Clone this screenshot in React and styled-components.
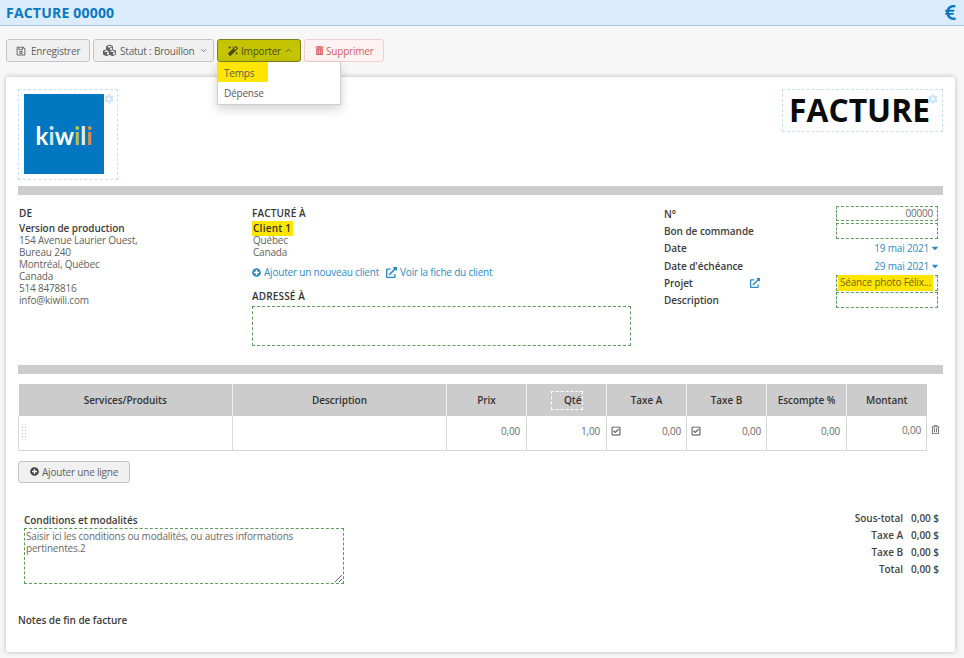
import styled, { createGlobalStyle } from 'styled-components';
import {
  FaRegSave,
  FaCubes,
  FaMagic,
  FaTrashAlt,
  FaRegTrashAlt,
  FaCog,
  FaPlusCircle,
  FaExternalLinkAlt,
  FaRegCheckSquare,
  FaEuroSign,
  FaCaretDown,
} from 'react-icons/fa';
import { FiChevronDown, FiChevronUp } from 'react-icons/fi';

const GlobalStyle = createGlobalStyle`
  html, body {
    margin: 0;
    padding: 0;
    height: 100%;
    overflow: hidden;
    background: #f7f7f7;
    font-family: "Open Sans", "Liberation Sans", sans-serif;
    font-size: 10px;
    letter-spacing: -0.2px;
    color: #5f5f5f;
  }
  * { box-sizing: border-box; }
  svg { flex: none; }
`;

const Header = styled.header`
  height: 26px;
  background: #daecfd;
  border-bottom: 1px solid #a9c7e2;
  display: flex;
  align-items: center;
  justify-content: space-between;
  padding: 0 5px 0 6px;
  color: #0a78bf;
`;

const Title = styled.h1`
  margin: 0;
  font-size: 14px;
  font-weight: 700;
  letter-spacing: 0.2px;
`;

const Toolbar = styled.div`
  display: flex;
  padding: 13px 6px 15px;
  height: 51px;
`;

const Button = styled.button`
  height: 23px;
  display: flex;
  align-items: center;
  gap: ${(p) => p.$gap || 4}px;
  padding: 0 0 0 ${(p) => p.$pad || 9}px;
  width: ${(p) => p.$width}px;
  margin-right: ${(p) => p.$after || 0}px;
  flex: none;
  white-space: nowrap;
  font: inherit;
  letter-spacing: inherit;
  border-radius: 3px;
  border: 1px solid ${(p) => (p.$active ? '#7d7d20' : p.$danger ? '#f2d0d0' : '#c4c4c4')};
  background: ${(p) => (p.$active ? '#c4c400' : p.$danger ? '#fdf3f3' : '#f0f0f0')};
  color: ${(p) => (p.$active ? '#4b4b10' : p.$danger ? '#d9605e' : '#5f5f5f')};
`;

const Menu = styled.div`
  position: absolute;
  left: 217px;
  top: 62px;
  width: 124px;
  height: 43px;
  background: #fff;
  border: 1px solid #cfcfcf;
  border-top: 0;
  box-shadow: 0 4px 10px rgba(0, 0, 0, 0.18);
  z-index: 5;
`;

const MenuItem = styled.div`
  height: 20px;
  line-height: 22px;
  padding-left: 6px;
  color: #5c5c5c;
  width: ${(p) => (p.$highlight ? '50px' : 'auto')};
  background: ${(p) => (p.$highlight ? '#ffe600' : 'transparent')};
`;

const Card = styled.main`
  margin: 0 9px 0 6px;
  height: 575px;
  background: #fff;
  border-radius: 2px;
  box-shadow: 0 0 5px rgba(0, 0, 0, 0.25);
  padding: 12px 12px 0;
`;

const TopRow = styled.div`
  display: flex;
  justify-content: space-between;
  height: 91px;
`;

const LogoBox = styled.div`
  position: relative;
  width: 100px;
  height: 91px;
  border: 1px dashed #c7e0f5;
  padding: 4px 5px;
`;

const LogoImage = styled.div`
  width: 80px;
  height: 80px;
  background: #0077c0;
  display: flex;
  align-items: center;
  justify-content: center;
  padding-top: 2px;
  font-family: "Lato", sans-serif;
  font-size: 24px;
  font-weight: 700;
  color: #fff;
  letter-spacing: 0.1px;
`;

const LogoLetter = styled.span`
  color: ${(p) => p.$color};
`;

const SettingsIcon = styled(FaCog)`
  position: absolute;
  top: ${(p) => p.$top}px;
  right: ${(p) => p.$right}px;
  font-size: 10px;
  color: #cfe5f7;
`;

const DocTitleBox = styled.div`
  position: relative;
  width: 161px;
  height: 43px;
  border: 1px dashed #c7e0f5;
  display: flex;
  align-items: center;
  justify-content: center;
  padding: 0 6px 2px 0;
  font-size: 31.8px;
  letter-spacing: 0;
  font-weight: 700;
  color: #0b0b0b;
`;

const Bar = styled.div`
  height: 9px;
  margin-top: ${(p) => p.$top}px;
  background: #cccccc;
`;

const Info = styled.section`
  display: grid;
  grid-template-columns: 234px 379px 274px;
  padding-top: 11px;
  height: 151px;
  line-height: 12px;
`;

const FromCol = styled.div`
  padding-left: 1px;
`;

const ColTitle = styled.div`
  font-weight: 600;
  letter-spacing: 0.15px;
  color: #333;
  height: ${(p) => p.$height || 15}px;
  line-height: 15px;
`;

const FromTitle = styled(ColTitle)`
  height: 16px;
`;

const Strong = styled.div`
  font-weight: 600;
  letter-spacing: -0.07px;
  color: #3c3c3c;
`;

const ClientName = styled.div`
  width: 41px;
  background: #ffe600;
  font-weight: 600;
  letter-spacing: 0.25px;
  color: #333;
  padding: 0 1px;
  height: 15px;
  line-height: 14px;
  margin-bottom: -2px;
`;

const ClientLines = styled.div`
  position: relative;
  padding-left: 1px;
`;

const Links = styled.div`
  display: flex;
  gap: 7px;
  margin: 7px 0 10px;
  height: 14px;
  align-items: center;
  color: #2a8bc9;
`;

const LinkItem = styled.span`
  display: flex;
  align-items: center;
  gap: 3px;
  svg { font-size: ${(p) => p.$icon}px; }
`;

const AddressBox = styled.div`
  height: 40px;
  border: 1px dashed #5d9a5d;
  margin-top: 3px;
`;

const MetaCol = styled.div`
  margin: -1px 0 0 33px;
  width: 241px;
  display: grid;
  grid-template-columns: 172px 102px;
  grid-auto-rows: 17.3px;
  align-content: start;
  align-items: center;
`;

const MetaLabel = styled.div`
  font-weight: 600;
  letter-spacing: -0.05px;
  color: #3c3c3c;
  display: flex;
  align-items: center;
`;

const ProjectName = styled.span`
  width: 86px;
`;

const ProjectLink = styled(FaExternalLinkAlt)`
  font-size: 10px;
  color: #2a8bc9;
`;

const Field = styled.div`
  height: 15.5px;
  border: 1px dashed #5d9a5d;
  text-align: right;
  padding: 0 4px;
  line-height: 13px;
  color: #6a6a6a;
`;

const ProjectField = styled(Field)`
  text-align: left;
  padding: 0;
`;

const ProjectValue = styled.span`
  display: block;
  margin: -1px 4px 0 1px;
  height: 16px;
  line-height: 15px;
  background: #ffe600;
  color: #6f6600;
  padding-left: 2px;
  white-space: nowrap;
  overflow: hidden;
`;

const DateValue = styled.div`
  color: #2a8bc9;
  display: flex;
  align-items: center;
  justify-content: flex-end;
  gap: 1px;
  svg { font-size: 10px; margin-right: -2px; }
`;

const TableWrap = styled.div`
  position: relative;
  width: 909px;
  margin-top: 10px;
`;

const Table = styled.table`
  width: 908px;
  table-layout: fixed;
  border-collapse: collapse;
  border-bottom: 1px solid #d6d6d6;
`;

const Th = styled.th`
  height: 32px;
  background-color: #cccccc;
  background-image: radial-gradient(#c4c4c4 0.6px, transparent 0.7px);
  background-size: 2px 2px;
  border-left: 1px solid #f0f0f0;
  font-weight: 600;
  letter-spacing: -0.05px;
  font-size: 10px;
  color: #333;
  text-align: center;
  width: ${(p) => p.$width}px;
  padding: 0;
  &:first-child { border-left: 0; }
`;

const QtyMark = styled.span`
  display: inline-block;
  width: 32px;
  height: 19px;
  line-height: 17px;
  border: 1px dashed #fff;
  text-align: right;
`;

const Td = styled.td`
  height: 34px;
  vertical-align: top;
  border-left: 1px solid #d6d6d6;
  text-align: right;
  padding: 8px 6px 0 0;
  color: #6a6a6a;
  position: relative;
  &:last-child { border-right: 1px solid #d6d6d6; padding-right: 5px; padding-top: 7px; }
`;

const TaxCell = styled.div`
  display: flex;
  align-items: center;
  justify-content: space-between;
  padding-left: 4px;
  margin-right: -1px;
  svg { font-size: 10px; color: #444; }
`;

const DragHandle = styled.div`
  position: absolute;
  left: 2px;
  top: 10px;
  width: 6px;
  height: 13px;
  background-image: radial-gradient(#bdbdbd 0.9px, transparent 1px);
  background-size: 3px 3px;
`;

const RemoveIcon = styled(FaRegTrashAlt)`
  position: absolute;
  left: 913px;
  top: 41px;
  font-size: 9px;
  color: #666;
`;

const AddLine = styled(Button)`
  width: 112px;
  height: 22px;
  margin-top: 10px;
  gap: 3px;
  svg { font-size: 9px; color: #444; }
`;

const Bottom = styled.section`
  display: flex;
  justify-content: space-between;
  margin-top: 30px;
  height: 100px;
`;

const Terms = styled.div`
  margin-left: 6px;
`;

const TermsTitle = styled.div`
  font-weight: 600;
  letter-spacing: -0.05px;
  color: #3c3c3c;
  height: 15px;
  line-height: 14px;
`;

const TermsBox = styled.textarea`
  display: block;
  width: 320px;
  height: 56px;
  border: 1px dashed #5d9a5d;
  font: inherit;
  letter-spacing: inherit;
  color: #6a6a6a;
  padding: 1px;
  line-height: 12px;
  outline: none;
`;

const Totals = styled.div`
  display: grid;
  grid-template-columns: auto 31px;
  column-gap: 5px;
  grid-auto-rows: 17px;
  align-items: center;
  justify-content: end;
  margin: -3px 4px 0 0;
  text-align: right;
  font-weight: 600;
  letter-spacing: -0.05px;
  color: #444;
  height: 68px;
`;

const Notes = styled.div`
  font-weight: 600;
  letter-spacing: -0.05px;
  color: #3c3c3c;
`;

export default function App() {
  return (
    <>
      <GlobalStyle />
      <Header>
        <Title>FACTURE 00000</Title>
        <FaEuroSign size={17} />
      </Header>
      <Toolbar>
        <Button $width={84} $after={3} $gap={5}><FaRegSave size={10} /> Enregistrer</Button>
        <Button $width={121} $after={3}><FaCubes size={13} /> Statut : Brouillon <FiChevronDown size={9} /></Button>
        <Button $width={84} $after={3} $pad={10} $gap={3} $active><FaMagic size={10} /> Importer <FiChevronUp size={9} /></Button>
        <Button $width={80} $pad={10} $gap={2} $danger><FaTrashAlt size={9} /> Supprimer</Button>
      </Toolbar>
      <Menu>
        <MenuItem $highlight>Temps</MenuItem>
        <MenuItem>Dépense</MenuItem>
      </Menu>
      <Card>
        <TopRow>
          <LogoBox>
            <LogoImage>
              k<LogoLetter $color="#cfe6f5">i</LogoLetter>w
              <LogoLetter $color="#b7c62a">i</LogoLetter>
              <LogoLetter $color="#e8efe0">l</LogoLetter>
              <LogoLetter $color="#d9903a">i</LogoLetter>
            </LogoImage>
            <SettingsIcon $top={4} $right={3} />
          </LogoBox>
          <DocTitleBox>
            FACTURE
            <SettingsIcon $top={4} $right={4} />
          </DocTitleBox>
        </TopRow>
        <Bar $top={6} />
        <Info>
          <FromCol>
            <FromTitle>DE</FromTitle>
            <Strong>Version de production</Strong>
            <div>154 Avenue Laurier Ouest,</div>
            <div>Bureau 240</div>
            <div>Montréal, Québec</div>
            <div>Canada</div>
            <div>514 8478816</div>
            <div>info@kiwili.com</div>
          </FromCol>
          <div>
            <ColTitle>FACTURÉ À</ColTitle>
            <ClientName>Client 1</ClientName>
            <ClientLines>
              <div>Québec</div>
              <div>Canada</div>
            </ClientLines>
            <Links>
              <LinkItem $icon={9}><FaPlusCircle /> Ajouter un nouveau client</LinkItem>
              <LinkItem $icon={11}><FaExternalLinkAlt /> Voir la fiche du client</LinkItem>
            </Links>
            <ColTitle $height={14}>ADRESSÉ À</ColTitle>
            <AddressBox />
          </div>
          <MetaCol>
            <MetaLabel>N°</MetaLabel>
            <Field>00000</Field>
            <MetaLabel>Bon de commande</MetaLabel>
            <Field />
            <MetaLabel>Date</MetaLabel>
            <DateValue>19 mai 2021 <FaCaretDown /></DateValue>
            <MetaLabel>Date d'échéance</MetaLabel>
            <DateValue>29 mai 2021 <FaCaretDown /></DateValue>
            <MetaLabel><ProjectName>Projet</ProjectName><ProjectLink /></MetaLabel>
            <ProjectField><ProjectValue>Séance photo Félix...</ProjectValue></ProjectField>
            <MetaLabel>Description</MetaLabel>
            <Field />
          </MetaCol>
        </Info>
        <Bar $top={19} />
        <TableWrap>
          <Table>
            <thead>
              <tr>
                <Th $width={214}>Services/Produits</Th>
                <Th $width={214}>Description</Th>
                <Th $width={80}>Prix</Th>
                <Th $width={80}><QtyMark>Qté</QtyMark></Th>
                <Th $width={80}>Taxe A</Th>
                <Th $width={80}>Taxe B</Th>
                <Th $width={80}>Escompte %</Th>
                <Th $width={80}>Montant</Th>
              </tr>
            </thead>
            <tbody>
              <tr>
                <Td><DragHandle /></Td>
                <Td />
                <Td>0,00</Td>
                <Td>1,00</Td>
                <Td><TaxCell><FaRegCheckSquare /> 0,00</TaxCell></Td>
                <Td><TaxCell><FaRegCheckSquare /> 0,00</TaxCell></Td>
                <Td>0,00</Td>
                <Td>0,00</Td>
              </tr>
            </tbody>
          </Table>
          <RemoveIcon />
        </TableWrap>
        <AddLine $pad={11}><FaPlusCircle /> Ajouter une ligne</AddLine>
        <Bottom>
          <Terms>
            <TermsTitle>Conditions et modalités</TermsTitle>
            <TermsBox defaultValue="Saisir ici les conditions ou modalités, ou autres informations pertinentes.2" />
          </Terms>
          <Totals>
            <span>Sous-total</span><span>0,00 $</span>
            <span>Taxe A</span><span>0,00 $</span>
            <span>Taxe B</span><span>0,00 $</span>
            <span>Total</span><span>0,00 $</span>
          </Totals>
        </Bottom>
        <Notes>Notes de fin de facture</Notes>
      </Card>
    </>
  );
}
